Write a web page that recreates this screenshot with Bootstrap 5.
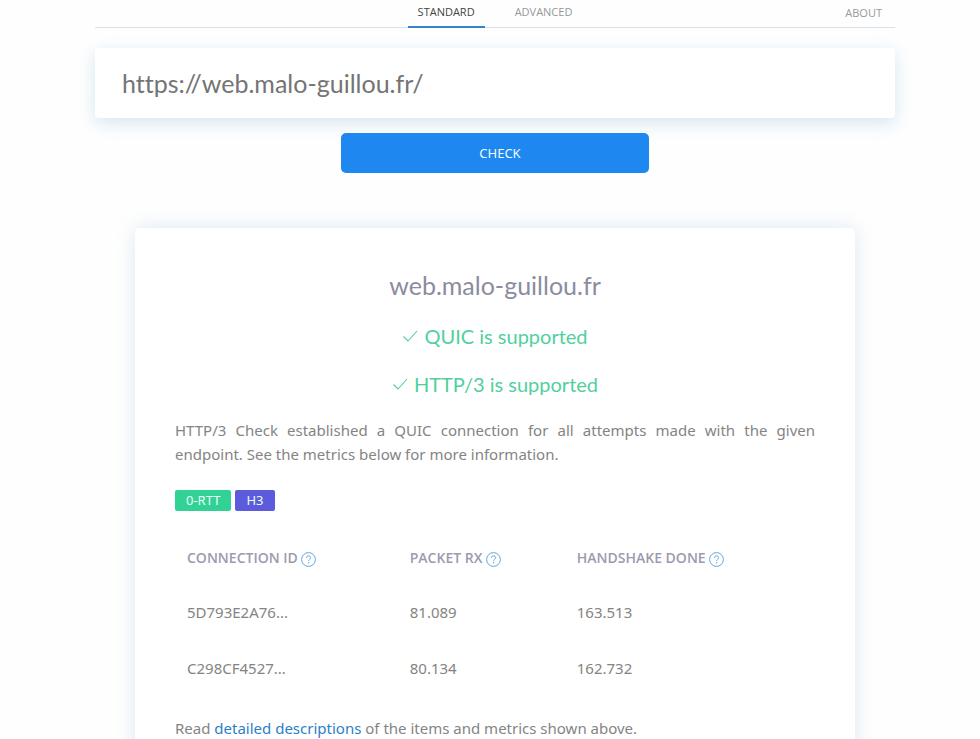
<!DOCTYPE html>
<html lang="en">
<head>
<meta charset="utf-8">
<meta name="viewport" content="width=device-width, initial-scale=1">
<title>HTTP/3 Check</title>
<link href="https://cdn.jsdelivr.net/npm/bootstrap@5.3.0/dist/css/bootstrap.min.css" rel="stylesheet">
<style>
html { scrollbar-width: none; }
body { font-family: "Noto Sans", "Open Sans", sans-serif; font-size: 15px; line-height: 24px; color: #848484; background: #fefefe; padding-left: 10px; }
.page { max-width: 800px; }
.top-bar { border-bottom: 1px solid #d5e3ee; height: 28px; display: grid; grid-template-columns: 1fr auto 1fr; font: 11px/24px "Open Sans", sans-serif; }
.top-bar .nav { grid-column: 2; gap: 20px; }
.top-bar .nav-link { color: #989898; padding: 0 10px; border-radius: 0; height: 28px; }
.top-bar .nav-link.active { color: #444; border-bottom: 2px solid #3583cc; }
.top-bar .about { color: #989898; padding-right: 13px; line-height: 26px; }
.url-box, .host-name, .support { font-family: Lato, sans-serif; font-weight: 400; font-variant-ligatures: none; }
.url-box { height: 70px; border: 0; border-radius: 4px; padding: 0 27px; font-size: 25px; line-height: 36px; color: #747474; background: #fff; box-shadow: 0 5px 18px rgba(50, 130, 175, .2); }
.check-btn { width: 308px; height: 40px; margin-top: 15px; background: #1f87f0; color: #f2faff; border: 0; border-radius: 5px; font-size: 13px; padding: 2px 0 0 10px; }
.result { max-width: 720px; margin-top: 55px; padding: 38px 40px 60px; border-radius: 4px; background: #fff; box-shadow: 0 0 20px rgba(70, 135, 180, .18); }
.host-name { font-size: 25px; line-height: 38px; color: #8c8ca0; margin: 0 0 18px; }
.support { display: flex; justify-content: center; align-items: center; gap: 6px; font-size: 20px; line-height: 28px; color: #50d09d; margin: 0 0 20px; }
.summary { text-align: justify; margin: 0 0 24px; }
.tag { font-size: 13px; line-height: 21px; padding: 0 11px; border-radius: 2px; color: #eafff6; }
.tag-rtt { background: #32d296; }
.tag-h3 { background: #5b5bdc; }
.metrics { table-layout: fixed; width: 100%; margin: 20px 0; }
.metrics th { font: 600 14px/21px "Open Sans", sans-serif; color: #9c9aaf; padding: 16px 12px; }
.metrics td { padding: 16px 12px; }
.help { color: #62a5dc; line-height: 0; }
.text-anchor { color: #2b7fc9; text-decoration: none; }
</style>
<script src="https://cdn.jsdelivr.net/npm/bootstrap@5.3.0/dist/js/bootstrap.bundle.min.js"></script>
</head>
<body>
<svg class="d-none">
  <symbol id="help-icon" viewBox="0 0 15 15"><circle cx="7.5" cy="7.5" r="6.9" fill="none" stroke="currentColor"/><path d="M5.5 5.8c0-1.2.9-1.9 2.1-1.9 1.1 0 2 .7 2 1.8 0 1.6-2 1.7-2 3.2" fill="none" stroke="currentColor"/><circle cx="7.6" cy="10.7" r=".7" fill="currentColor"/></symbol>
  <symbol id="tick-icon" viewBox="0 0 16 16"><path d="M1.5 8.5 6 13 15 3" fill="none" stroke="currentColor" stroke-width="1.1"/></symbol>
</svg>
<div class="page mx-auto">
  <header class="top-bar">
    <nav class="nav">
      <a class="nav-link active" href="#" aria-current="page">STANDARD</a>
      <a class="nav-link" href="#">ADVANCED</a>
    </nav>
    <a class="about text-end text-decoration-none" href="#">ABOUT</a>
  </header>
  <main>
    <form class="d-flex flex-column align-items-center mt-3 pt-1">
      <input class="url-box w-100" type="text" aria-label="URL" value="https://web.malo-guillou.fr/">
      <button class="check-btn btn" type="button">CHECK</button>
    </form>
    <section class="result mx-auto">
      <h1 class="host-name text-center">web.malo-guillou.fr</h1>
      <h2 class="support"><svg width="16" height="16" aria-hidden="true"><use href="#tick-icon"/></svg>QUIC is supported</h2>
      <h2 class="support"><svg width="16" height="16" aria-hidden="true"><use href="#tick-icon"/></svg>HTTP/3 is supported</h2>
      <p class="summary">HTTP/3 Check established a QUIC connection for all attempts made with the given endpoint. See the metrics below for more information.</p>
      <div class="d-flex gap-1"><span class="tag tag-rtt">0-RTT</span><span class="tag tag-h3">H3</span></div>
      <table class="metrics">
        <colgroup><col style="width:34.8%"><col style="width:26.1%"><col></colgroup>
        <thead><tr>
          <th scope="col">CONNECTION ID <a class="help" href="#" aria-label="About connection ID"><svg width="15" height="15"><use href="#help-icon"/></svg></a></th>
          <th scope="col">PACKET RX <a class="help" href="#" aria-label="About packet RX"><svg width="15" height="15"><use href="#help-icon"/></svg></a></th>
          <th scope="col">HANDSHAKE DONE <a class="help" href="#" aria-label="About handshake done"><svg width="15" height="15"><use href="#help-icon"/></svg></a></th>
        </tr></thead>
        <tbody>
          <tr><td>5D793E2A76...</td><td>81.089</td><td>163.513</td></tr>
          <tr><td>C298CF4527...</td><td>80.134</td><td>162.732</td></tr>
        </tbody>
      </table>
      <p class="mb-0">Read <a class="text-anchor" href="#">detailed descriptions</a> of the items and metrics shown above.</p>
    </section>
  </main>
</div>
</body>
</html>
